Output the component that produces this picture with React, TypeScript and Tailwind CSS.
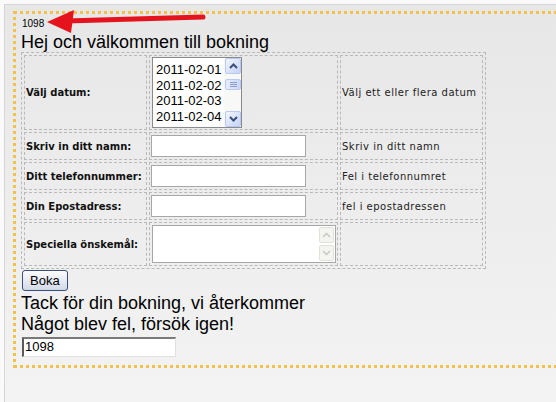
import React from "react";

function Chevron({ up, color, w = 2 }: { up: boolean; color: string; w?: number }) {
  return (
    <svg width="9" height="6" viewBox="0 0 9 6">
      <polyline
        points={up ? "1,5 4.5,1.5 8,5" : "1,1 4.5,4.5 8,1"}
        fill="none"
        stroke={color}
        strokeWidth={w}
      />
    </svg>
  );
}

function XpButton({ up }: { up: boolean }) {
  return (
    <div className="h-[16px] w-[16px] rounded-[2px] border border-[#b9c9f3] bg-linear-to-br from-[#f3f6ff] to-[#c4d3f7] flex items-center justify-center">
      <Chevron up={up} color="#3c4f7a" />
    </div>
  );
}

function DisabledButton({ up }: { up: boolean }) {
  return (
    <div className="h-[16px] w-[15px] rounded-[2px] border border-[#e2e2da] bg-[#f4f4f0] flex items-center justify-center">
      <Chevron up={up} color="#c9c9c1" w={1.5} />
    </div>
  );
}

const labelCls =
  "border border-dashed border-[#b9b9b9] p-px align-middle font-['DejaVu_Sans',Verdana,sans-serif] font-bold text-[10px] text-[#111]";
const inputCell = "border border-dashed border-[#b9b9b9] p-px align-middle";
const descCls =
  "border border-dashed border-[#b9b9b9] p-px align-middle font-['DejaVu_Sans',Verdana,sans-serif] text-[10px] tracking-[0.5px] text-[#222]";

export default function App() {
  return (
    <div className="relative w-[556px] h-[402px] overflow-hidden bg-[#fafafa] pt-[4px] pl-[4px] font-['Liberation_Sans',Arial,sans-serif] text-black">
      <div className="h-[398px] border-l border-t border-[#d6d6d6] bg-linear-to-b from-[#e7e7e7] to-[#f3f3f3] pl-[8px] pt-[6px]">
        <div className="w-[600px] border-[3px] border-dotted border-[#f2c24c] pl-[5px] pt-[4px] pb-[8px]">
          <div className="text-[10px] leading-[12px] pl-px">1098</div>
          <h1 className="mt-[2px] text-[18px] leading-[20px] font-normal">Hej och välkommen till bokning</h1>
          <table className="table-fixed w-[465px] border-separate border-spacing-[2px] border border-dashed border-[#b9b9b9]">
            <tbody>
              <tr>
                <td className={`${labelCls} w-[123px]`}>Välj datum:</td>
                <td className={`${inputCell} w-[189px]`}>
                  <div className="ml-px w-[90px] h-[71px] border border-[#8a8a8a] bg-white flex">
                    <div className="flex-1 pl-[3px] pt-[4px] text-[13px] leading-[15.5px]">
                      <div>2011-02-01</div>
                      <div>2011-02-02</div>
                      <div>2011-02-03</div>
                      <div>2011-02-04</div>
                    </div>
                    <div className="w-[17px] flex flex-col bg-[#f8f8f6] pl-px">
                      <XpButton up={true} />
                      <div className="mt-[5px] h-[11px] w-[16px] rounded-[2px] border border-[#b9c9f3] bg-linear-to-r from-[#e6edff] to-[#cbd8f8] flex flex-col items-center justify-center gap-px">
                        <div className="w-[7px] h-px bg-[#8a9cc8]" />
                        <div className="w-[7px] h-px bg-[#8a9cc8]" />
                        <div className="w-[7px] h-px bg-[#8a9cc8]" />
                      </div>
                      <div className="flex-1" />
                      <XpButton up={false} />
                    </div>
                  </div>
                </td>
                <td className={`${descCls} w-[143px]`}>Välj ett eller flera datum</td>
              </tr>
              <tr>
                <td className={`${labelCls} h-[28px]`}>Skriv in ditt namn:</td>
                <td className={inputCell}>
                  <div className="w-[155px] h-[22px] border border-[#a7a7a7] bg-white" />
                </td>
                <td className={descCls}>Skriv in ditt namn</td>
              </tr>
              <tr>
                <td className={`${labelCls} h-[28px]`}>Ditt telefonnummer:</td>
                <td className={inputCell}>
                  <div className="w-[155px] h-[22px] border border-[#a7a7a7] bg-white" />
                </td>
                <td className={descCls}>Fel i telefonnumret</td>
              </tr>
              <tr>
                <td className={`${labelCls} h-[28px]`}>Din Epostadress:</td>
                <td className={inputCell}>
                  <div className="w-[155px] h-[22px] border border-[#a7a7a7] bg-white" />
                </td>
                <td className={descCls}>fel i epostadressen</td>
              </tr>
              <tr>
                <td className={`${labelCls} h-[44px]`}>Speciella önskemål:</td>
                <td className={inputCell}>
                  <div className="ml-px w-[184px] h-[38px] border border-[#a7a7a7] bg-white flex justify-end">
                    <div className="w-[16px] flex flex-col pt-px pb-px">
                      <DisabledButton up={true} />
                      <div className="flex-1" />
                      <DisabledButton up={false} />
                    </div>
                  </div>
                </td>
                <td className={descCls}></td>
              </tr>
            </tbody>
          </table>
          <div className="mt-px ml-px h-[21px] flex">
            <button className="h-[21px] px-[7px] rounded-[3px] border border-[#3a4e78] bg-linear-to-b from-[#fbfcff] to-[#d3d9e8] text-[13px] leading-[17px] text-black">
              Boka
            </button>
          </div>
          <p className="mt-[2px] text-[18px] leading-[21px]">Tack för din bokning, vi återkommer</p>
          <p className="text-[18px] leading-[21px]">Något blev fel, försök igen!</p>
          <div className="mt-[2px] ml-px w-[154px] h-[20px] border-t-2 border-l-2 border-b border-r border-t-[#7a7a7a] border-l-[#5a5a5a] border-b-[#e0e0e0] border-r-[#e0e0e0] bg-white text-[13px] leading-[16px] pl-px">
            1098
          </div>
        </div>
      </div>
      <svg className="absolute left-0 top-0" width="220" height="40" viewBox="0 0 220 40">
        <line x1="203" y1="17" x2="66" y2="21" stroke="#e5141c" strokeWidth="5" strokeLinecap="round" />
        <polygon points="47,22 74,10 71,33" fill="#e5141c" />
      </svg>
    </div>
  );
}
